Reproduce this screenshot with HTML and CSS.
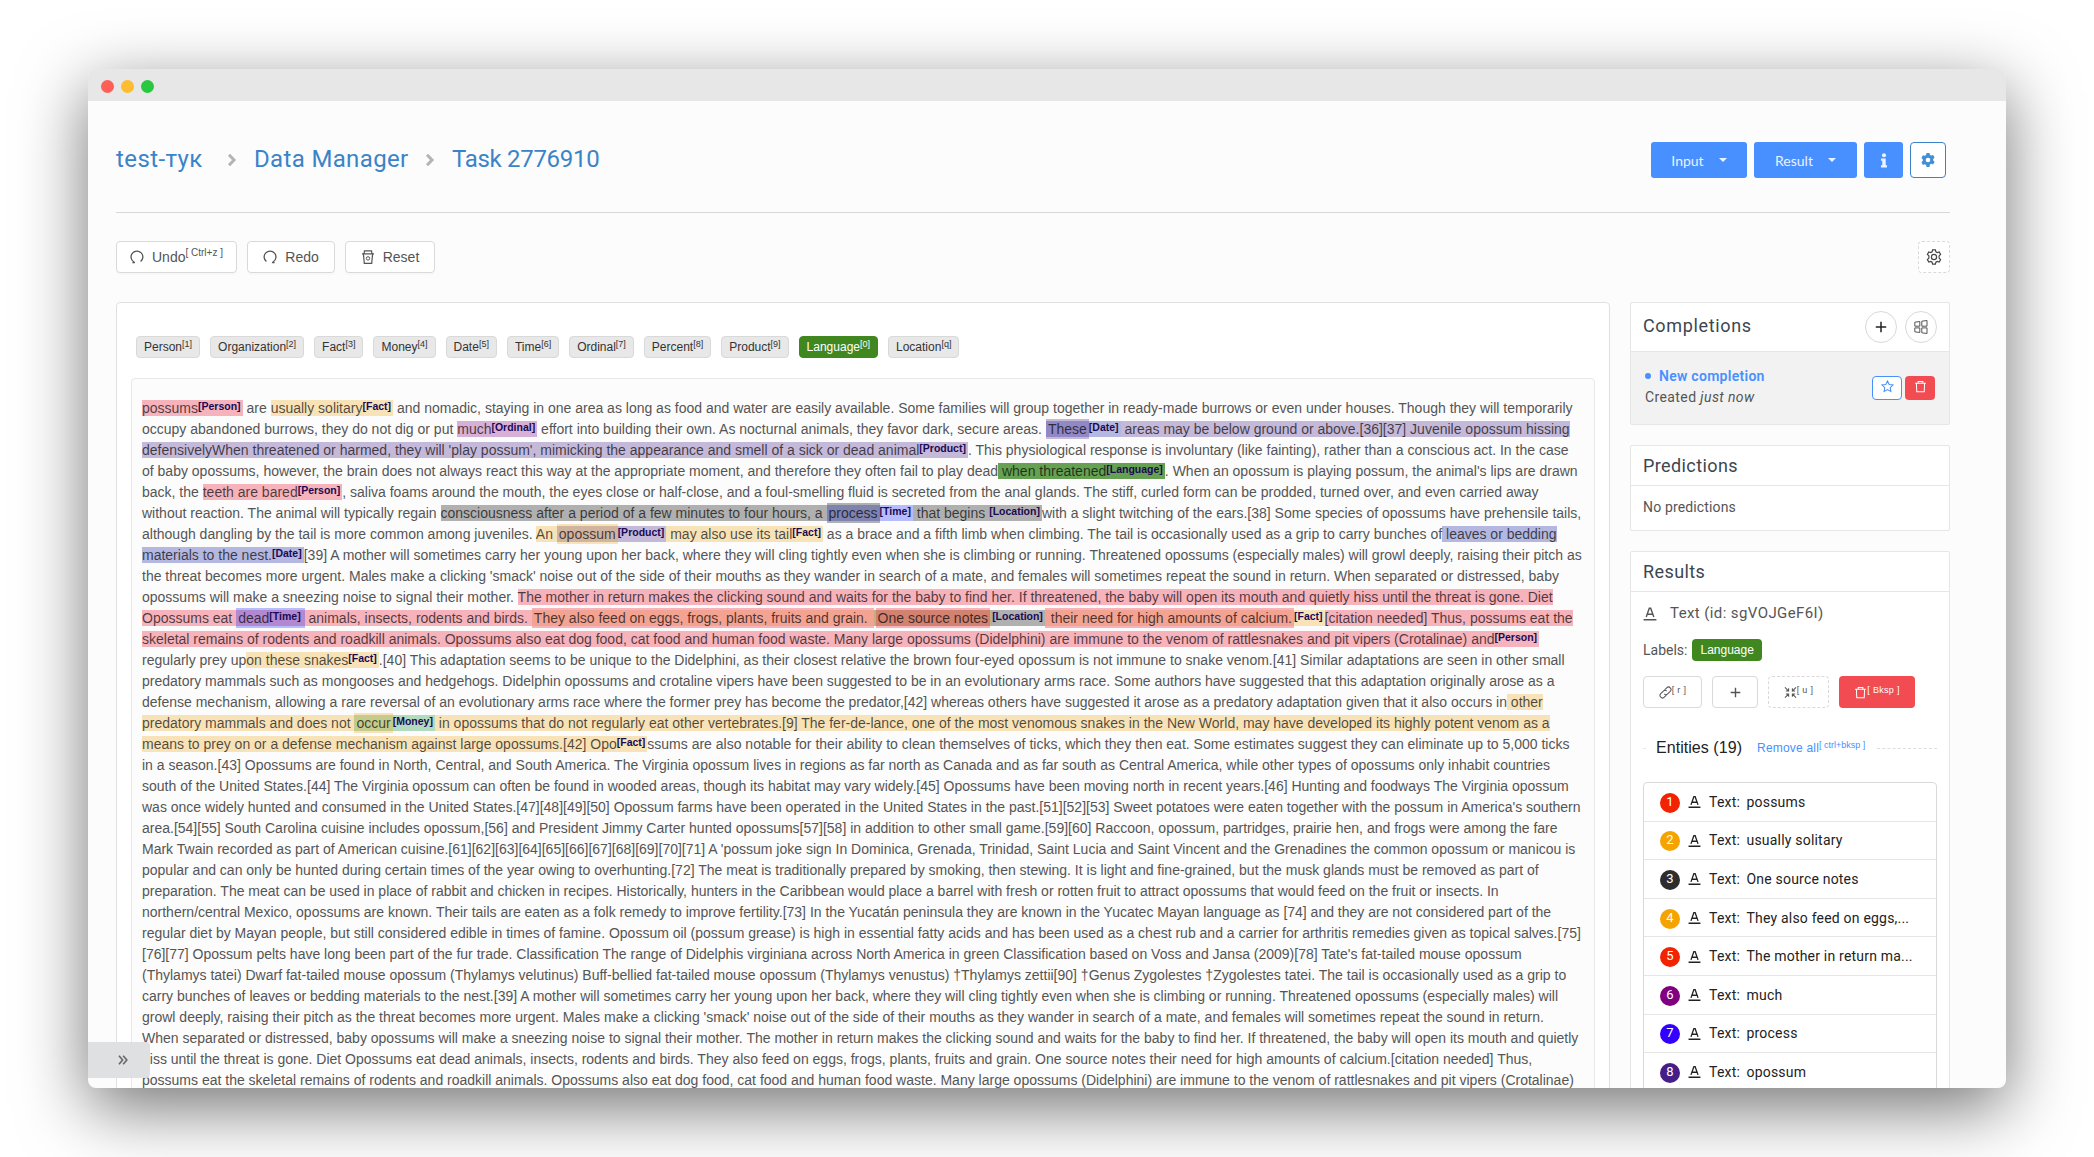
FILE: index.html
```html
<!DOCTYPE html>
<html lang="en">
<head>
<meta charset="utf-8">
<title>Task 2776910</title>
<link rel="stylesheet" href="styles.css">
</head>
<body>
<svg class="defs" aria-hidden="true">
  <symbol id="trash" viewBox="0 0 14 14"><path d="M1.2 3.5h11.6M4.5 3.3V1.5h5v1.8M2.6 3.6l.4 9h8l.4-9" fill="none" stroke="currentColor" stroke-width="1.1"/></symbol>
  <symbol id="letter" viewBox="0 0 14 14"><path d="M3.2 10.6L6.3 1.8h1.4l3.1 8.8M4.4 7.8h5.2M.6 13.2h12.8" fill="none" stroke="currentColor" stroke-width="1.4"/></symbol>
  <symbol id="plus" viewBox="0 0 14 14"><path d="M7 1.8v10.4M1.8 7h10.4" fill="none" stroke="currentColor" stroke-width="1.5"/></symbol>
</svg>
<div class="window">
  <div class="titlebar"><i class="dot red"></i><i class="dot amber"></i><i class="dot lime"></i></div>
  <div class="page">
    <header class="top">
      <nav class="crumbs">
        <a class="c1">test-тук</a>
        <svg class="chev" viewBox="0 0 10 14"><path d="M2 1.800L7 7l-5 5.200" fill="none" stroke="#b4b4b4" stroke-width="3"/></svg>
        <a class="c2">Data Manager</a>
        <svg class="chev" viewBox="0 0 10 14"><path d="M2 1.800L7 7l-5 5.200" fill="none" stroke="#b4b4b4" stroke-width="3"/></svg>
        <a class="c3">Task 2776910</a>
      </nav>
      <div class="actions">
        <button class="primary input">Input<i class="caret"></i></button>
        <button class="primary result">Result<i class="caret"></i></button>
        <button class="primary info"><svg width="8" height="15" viewBox="0 0 8 15"><circle cx="4" cy="2.200" r="2"/><path d="M1 5.500h4.700v6.800H7V14.500H1v-2.200h1.300V7.700H1z"/></svg></button>
        <button class="gear"><svg width="14" height="14" viewBox="0 0 14 14"><path fill-rule="evenodd" d="M5.500 0h3l.4 1.900 1.300.7L12.100 2l1.500 2.600-1.400 1.300v1.500l1.400 1.300-1.500 2.700-1.900-.6-1.300.7L8.500 14h-3l-.4-2-1.300-.7-1.900.6L.4 9.200l1.400-1.300V6.300L.4 4.900 1.900 2.200l1.900.5 1.300-.7zM7 4.700a2.300 2.300 0 1 0 0 4.600 2.300 2.300 0 0 0 0-4.600z"/></svg></button>
      </div>
    </header>
    <div class="toolbar">
      <button class="tool undo"><svg viewBox="0 0 14 14"><path d="M4.800 12.800L3.600 11.800A5.900 5.900 0 1 1 10.600 11.600M2.400 12.700h2.500" fill="none" stroke="currentColor" stroke-width="1.300"/></svg>Undo<sup>[ Ctrl+z ]</sup></button>
      <button class="tool redo"><svg viewBox="0 0 14 14"><path d="M9.200 12.800L10.400 11.800A5.900 5.900 0 1 0 3.400 11.600M11.600 12.700H9.100" fill="none" stroke="currentColor" stroke-width="1.300"/></svg>Redo</button>
      <button class="tool reset"><svg viewBox="0 0 14 14"><path d="M1 3.800h12M3 3.600L3.500.8h7l.5 2.800M2.400 4l.9 9.400h7.400L11.600 4" fill="none" stroke="currentColor" stroke-width="1.200"/><circle cx="7" cy="8.400" r="1.700" fill="none" stroke="currentColor"/></svg>Reset</button>
      <button class="settings"><svg width="16" height="16" viewBox="0 0 16 16" fill="none" stroke="#444" stroke-width="1.200"><path d="M6.600.8h2.800l.5 2 1.300.8 2-.6 1.400 2.400-1.500 1.500v2.200l1.500 1.500-1.400 2.400-2-.6-1.300.8-.5 2H6.600l-.5-2-1.300-.8-2 .6-1.400-2.400 1.500-1.500V6.900L1.400 5.400 2.800 3l2 .6 1.300-.8z"/><circle cx="8" cy="8" r="2.600"/></svg></button>
    </div>
    <div class="columns">
      <main class="editor">
        <div class="labels">
          <span>Person<sup>[1]</sup></span><span>Organization<sup>[2]</sup></span><span>Fact<sup>[3]</sup></span><span>Money<sup>[4]</sup></span><span>Date<sup>[5]</sup></span><span>Time<sup>[6]</sup></span><span>Ordinal<sup>[7]</sup></span><span>Percent<sup>[8]</sup></span><span>Product<sup>[9]</sup></span><span class="on">Language<sup>[0]</sup></span><span>Location<sup>[q]</sup></span>
        </div>
        <div class="text"><span class="h person">possums<b>[Person]</b></span> are <span class="h fact">usually solitary<b>[Fact]</b></span> and nomadic, staying in one area as long as food and water are easily available. Some families will group together in ready-made burrows or even under houses. Though they will temporarily<br>
occupy abandoned burrows, they do not dig or put <span class="h ordinal">much<b>[Ordinal]</b></span> effort into building their own. As nocturnal animals, they favor dark, secure areas. <span class="h date"><span class="h product in">These</span><b>[Date]</b></span><span class="h product"> areas may be below ground or above.[36][37] Juvenile opossum hissing<br>
defensivelyWhen threatened or harmed, they will 'play possum', mimicking the appearance and smell of a sick or dead animal<b>[Product]</b></span>. This physiological response is involuntary (like fainting), rather than a conscious act. In the case<br>
of baby opossums, however, the brain does not always react this way at the appropriate moment, and therefore they often fail to play dead<span class="h language"> when threatened<b>[Language]</b></span>. When an opossum is playing possum, the animal's lips are drawn<br>
back, the <span class="h person">teeth are bared<b>[Person]</b></span>, saliva foams around the mouth, the eyes close or half-close, and a foul-smelling fluid is secreted from the anal glands. The stiff, curled form can be prodded, turned over, and even carried away<br>
without reaction. The animal will typically regain <span class="h location">consciousness after a period of a few minutes to four hours, a </span><span class="h time"><span class="h location in">process</span><b>[Time]</b></span><span class="h location"> that begins <b>[Location]</b></span>with a slight twitching of the ears.[38] Some species of opossums have prehensile tails,<br>
although dangling by the tail is more common among juveniles. <span class="h fact">An </span><span class="h product"><span class="h fact in">opossum</span><b>[Product]</b></span><span class="h fact"> may also use its tail<b>[Fact]</b></span> as a brace and a fifth limb when climbing. The tail is occasionally used as a grip to carry bunches of<span class="h date"> leaves or bedding<br>
materials to the nest.<b>[Date]</b></span>[39] A mother will sometimes carry her young upon her back, where they will cling tightly even when she is climbing or running. Threatened opossums (especially males) will growl deeply, raising their pitch as<br>
the threat becomes more urgent. Males make a clicking 'smack' noise out of the side of their mouths as they wander in search of a mate, and females will sometimes repeat the sound in return. When separated or distressed, baby<br>
opossums will make a sneezing noise to signal their mother. <span class="h person">The mother in return makes the clicking sound and waits for the baby to find her. If threatened, the baby will open its mouth and quietly hiss until the threat is gone. Diet<br>
Opossums eat <span class="h time in">dead<b>[Time]</b></span> animals, insects, rodents and birds. </span><span class="h fact"><span class="h person in">They also feed on eggs, frogs, plants, fruits and grain. </span></span><span class="h location"><span class="h fact wrap"><span class="h person in">One source notes</span></span><b>[Location]</b></span><span class="h fact"><span class="h person in"> their need for high amounts of calcium.</span><b>[Fact]</b></span><span class="h person">[citation needed] Thus, possums eat the<br>
skeletal remains of rodents and roadkill animals. Opossums also eat dog food, cat food and human food waste. Many large opossums (Didelphini) are immune to the venom of rattlesnakes and pit vipers (Crotalinae) and<b>[Person]</b></span><br>
regularly prey up<span class="h fact">on these snakes<b>[Fact]</b></span>.[40] This adaptation seems to be unique to the Didelphini, as their closest relative the brown four-eyed opossum is not immune to snake venom.[41] Similar adaptations are seen in other small<br>
predatory mammals such as mongooses and hedgehogs. Didelphin opossums and crotaline vipers have been suggested to be in an evolutionary arms race. Some authors have suggested that this adaptation originally arose as a<br>
defense mechanism, allowing a rare reversal of an evolutionary arms race where the former prey has become the predator,[42] whereas others have suggested it arose as a predatory adaptation given that it also occurs in<span class="h fact"> other<br>
predatory mammals and does not </span><span class="h money"><span class="h fact in">occur</span><b>[Money]</b></span><span class="h fact"> in opossums that do not regularly eat other vertebrates.[9] The fer-de-lance, one of the most venomous snakes in the New World, may have developed its highly potent venom as a<br>
means to prey on or a defense mechanism against large opossums.[42] Opo<b>[Fact]</b></span>ssums are also notable for their ability to clean themselves of ticks, which they then eat. Some estimates suggest they can eliminate up to 5,000 ticks<br>
in a season.[43] Opossums are found in North, Central, and South America. The Virginia opossum lives in regions as far north as Canada and as far south as Central America, while other types of opossums only inhabit countries<br>
south of the United States.[44] The Virginia opossum can often be found in wooded areas, though its habitat may vary widely.[45] Opossums have been moving north in recent years.[46] Hunting and foodways The Virginia opossum<br>
was once widely hunted and consumed in the United States.[47][48][49][50] Opossum farms have been operated in the United States in the past.[51][52][53] Sweet potatoes were eaten together with the possum in America's southern<br>
area.[54][55] South Carolina cuisine includes opossum,[56] and President Jimmy Carter hunted opossums[57][58] in addition to other small game.[59][60] Raccoon, opossum, partridges, prairie hen, and frogs were among the fare<br>
Mark Twain recorded as part of American cuisine.[61][62][63][64][65][66][67][68][69][70][71] A 'possum joke sign In Dominica, Grenada, Trinidad, Saint Lucia and Saint Vincent and the Grenadines the common opossum or manicou is<br>
popular and can only be hunted during certain times of the year owing to overhunting.[72] The meat is traditionally prepared by smoking, then stewing. It is light and fine-grained, but the musk glands must be removed as part of<br>
preparation. The meat can be used in place of rabbit and chicken in recipes. Historically, hunters in the Caribbean would place a barrel with fresh or rotten fruit to attract opossums that would feed on the fruit or insects. In<br>
northern/central Mexico, opossums are known. Their tails are eaten as a folk remedy to improve fertility.[73] In the Yucatán peninsula they are known in the Yucatec Mayan language as [74] and they are not considered part of the<br>
regular diet by Mayan people, but still considered edible in times of famine. Opossum oil (possum grease) is high in essential fatty acids and has been used as a chest rub and a carrier for arthritis remedies given as topical salves.[75]<br>
[76][77] Opossum pelts have long been part of the fur trade. Classification The range of Didelphis virginiana across North America in green Classification based on Voss and Jansa (2009)[78] Tate's fat-tailed mouse opossum<br>
(Thylamys tatei) Dwarf fat-tailed mouse opossum (Thylamys velutinus) Buff-bellied fat-tailed mouse opossum (Thylamys venustus) †Thylamys zettii[90] †Genus Zygolestes †Zygolestes tatei. The tail is occasionally used as a grip to<br>
carry bunches of leaves or bedding materials to the nest.[39] A mother will sometimes carry her young upon her back, where they will cling tightly even when she is climbing or running. Threatened opossums (especially males) will<br>
growl deeply, raising their pitch as the threat becomes more urgent. Males make a clicking 'smack' noise out of the side of their mouths as they wander in search of a mate, and females will sometimes repeat the sound in return.<br>
When separated or distressed, baby opossums will make a sneezing noise to signal their mother. The mother in return makes the clicking sound and waits for the baby to find her. If threatened, the baby will open its mouth and quietly<br>
hiss until the threat is gone. Diet Opossums eat dead animals, insects, rodents and birds. They also feed on eggs, frogs, plants, fruits and grain. One source notes their need for high amounts of calcium.[citation needed] Thus,<br>
possums eat the skeletal remains of rodents and roadkill animals. Opossums also eat dog food, cat food and human food waste. Many large opossums (Didelphini) are immune to the venom of rattlesnakes and pit vipers (Crotalinae)</div>
      </main>
      <aside class="side">
        <section class="panel">
          <div class="head tall"><h2 class="wide">Completions</h2><button class="round"><svg><use href="#plus"/></svg></button><button class="round"><svg viewBox="0 0 14 14"><path d="M.8 2.200L5.800 1.500v4.700H.8zM7.800 1.200l5.200-.7v5.700H7.800zM.8 7.900h5v4.600L.8 11.800zM7.800 7.900H13v5.600l-5.200-.7z" fill="none" stroke="#555"/></svg></button></div>
          <div class="completion">
            <div class="info-text"><strong><i class="bullet"></i>New completion</strong><span>Created <em>just now</em></span></div>
            <button class="star"><svg viewBox="0 0 14 14"><path d="M7 1l1.800 3.900 4.200.5-3.100 2.900.8 4.200L7 10.400l-3.700 2.100.8-4.200L1 5.400l4.200-.5z" fill="none" stroke="currentColor" stroke-width="1.100"/></svg></button>
            <button class="del"><svg><use href="#trash"/></svg></button>
          </div>
        </section>
        <section class="panel">
          <div class="head"><h2>Predictions</h2></div>
          <p class="none">No predictions</p>
        </section>
        <section class="panel results">
          <div class="head"><h2>Results</h2></div>
          <div class="body">
            <div class="region"><svg><use href="#letter"/></svg>Text (id: sgVOJGeF6I)</div>
            <div class="lab">Labels: <span>Language</span></div>
            <div class="ops">
              <button class="link"><svg viewBox="0 0 14 14"><path d="M6 4.200l2.300-2.300a2.600 2.600 0 0 1 3.800 3.800L9.300 8.500a2.600 2.600 0 0 1-3.600.1M8 9.800l-2.300 2.300a2.600 2.600 0 0 1-3.800-3.800l2.800-2.800a2.600 2.600 0 0 1 3.600-.1" fill="none" stroke="currentColor" stroke-width="1.100"/></svg><sup>[ r ]</sup></button>
              <button class="add"><svg><use href="#plus"/></svg></button>
              <button class="unselect"><svg viewBox="0 0 14 14"><path d="M1 1.500l3.600 3.600M5 2.500v3H2M13 1.500L9.400 5.100M9 2.500v3h3M1 12.500l3.600-3.600M5 11.500v-3H2M13 12.500L9.400 8.900M9 11.500v-3h3" fill="none" stroke="currentColor" stroke-width="1.100"/></svg><sup>[ u ]</sup></button>
              <button class="bksp"><svg><use href="#trash"/></svg><sup>[ Bksp ]</sup></button>
            </div>
            <div class="divider"><span class="ent">Entities (19)</span><span class="remove">Remove all<sup>[ ctrl+bksp ]</sup></span></div>
            <ul class="list">
              <li><i class="n r">1</i><svg><use href="#letter"/></svg><span>Text:</span>possums</li>
              <li><i class="n o">2</i><svg><use href="#letter"/></svg><span>Text:</span>usually solitary</li>
              <li><i class="n k">3</i><svg><use href="#letter"/></svg><span>Text:</span>One source notes</li>
              <li><i class="n o">4</i><svg><use href="#letter"/></svg><span>Text:</span>They also feed on eggs,...</li>
              <li><i class="n r">5</i><svg><use href="#letter"/></svg><span>Text:</span>The mother in return ma...</li>
              <li><i class="n p">6</i><svg><use href="#letter"/></svg><span>Text:</span>much</li>
              <li><i class="n b">7</i><svg><use href="#letter"/></svg><span>Text:</span>process</li>
              <li><i class="n v">8</i><svg><use href="#letter"/></svg><span>Text:</span>opossum</li>
            </ul>
          </div>
        </section>
      </aside>
    </div>
  </div>
  <button class="expand"><svg width="10" height="10" viewBox="0 0 10 10"><path d="M1 .8L4.600 5 1 9.200M5.200.8L8.800 5 5.200 9.200" fill="none" stroke="#6b6b6b" stroke-width="1.700"/></svg></button>
</div>
</body>
</html>
```
FILE: styles.css
```css
* { box-sizing: border-box; }
body { margin: 0; height: 1157px; overflow: hidden; background: #fff; font-family: Roboto, "Liberation Sans", sans-serif; font-size: 14px; color: #555; padding: 69px 88px; }
button { font: inherit; color: inherit; margin: 0; padding: 0; border: 0; background: none; display: flex; align-items: center; justify-content: center; flex: none; }
h2, p, ul { margin: 0; padding: 0; font-weight: 400; }
.defs { position: absolute; width: 0; height: 0; }
.window { position: relative; width: 1918px; height: 1019px; border-radius: 8px; background: #fcfcfc; overflow: hidden; box-shadow: 0 20px 68px rgba(0,0,0,.55); }
.titlebar { height: 32px; background: #e7e7e7; display: flex; align-items: center; gap: 7px; padding: 2px 0 0 13px; }
.dot { width: 13px; height: 13px; border-radius: 50%; }
.red { background: #ff5f57; } .amber { background: #febc2e; } .lime { background: #28c840; }
.page { padding: 0 56px 0 28px; }
.top { height: 112px; border-bottom: 1px solid #d8d8d8; display: flex; align-items: center; justify-content: space-between; padding: 5px 4px 0 0; }
.crumbs { display: flex; align-items: center; font-size: 24px; color: #3b83c9; letter-spacing: .4px; }
.crumbs a { white-space: nowrap; }
.c1 { width: 94px; } .c2 { width: 154px; letter-spacing: .35px; } .c3 { width: 148px; letter-spacing: -.3px; }
.chev { width: 10px; height: 14px; margin: 1px 17px 0; }
.actions { display: flex; gap: 7px; font-family: Lato, sans-serif; margin-top: 2px; }
.primary { height: 36px; background: #4890ff; color: #eaf3ff; border-radius: 3px; fill: #eaf3ff; }
.input { width: 96px; } .result { width: 103px; } .info { width: 39px; }
.caret { border: 4px solid transparent; border-top-color: #eaf3ff; border-bottom: 0; margin-left: 15px; }
.gear { width: 36px; height: 36px; border: 1px solid #3b83c9; border-radius: 4px; fill: #4190d6; background: #fff; }
.toolbar { height: 89px; display: flex; gap: 10px; padding-top: 28px; font-family: "Liberation Sans", sans-serif; }
.tool { height: 32px; border: 1px solid #d9d9d9; border-radius: 4px; background: #fff; box-shadow: 0 2px 0 rgba(0,0,0,.015); }
.tool svg { width: 14px; height: 14px; margin-right: 8px; }
.undo { width: 121px; } .redo { width: 88px; } .reset { width: 90px; }
sup { line-height: 0; font-size: 10px; position: relative; top: -4px; vertical-align: baseline; }
.settings { margin-left: auto; width: 32px; height: 32px; border: 1px dashed #d9d9d9; border-radius: 4px; background: #fff; }
.columns { display: flex; gap: 20px; }
.editor { width: 1494px; height: 900px; border: 1px solid #e0e0e0; border-radius: 4px; background: #fff; padding: 33px 14px; }
.labels { display: flex; gap: 10px; padding-left: 5px; height: 42px; font: 12px "Liberation Sans", sans-serif; color: #333; }
.labels span { height: 22px; line-height: 21px; padding: 0 7px; border: 1px solid #d9d9d9; border-radius: 4px; background: #e8e8e8; white-space: nowrap; }
.labels sup { font-size: 9px; }
.labels .on { background: #41871f; border-color: #41871f; color: #fff; }
.text { height: 900px; border: 1px solid #e8e8e8; border-radius: 4px; background: #fcfcfc; padding: 19px 10px; font: 14px/21px "Liberation Sans", sans-serif; white-space: nowrap; width: 1464px; }
.h { color: rgba(0,0,0,.69); }
.h b { font-size: 10.500px; line-height: 0; position: relative; top: -3px; color: #1b0a52; padding-right: 2px; }
.in { padding: 2px; }
.wrap { padding: 0 2px; }
.person { background: rgba(235,55,80,.37); }
.fact { background: rgba(240,170,30,.3); }
.ordinal { background: rgba(128,0,128,.3); }
.product { background: rgba(70,30,135,.3); }
.date { background: rgba(12,24,155,.3); }
.time { background: rgba(20,40,255,.3); }
.location { background: rgba(0,0,0,.3); }
.money { background: rgba(5,140,45,.3); }
.language { background: #66a052; }
.side { width: 320px; display: flex; flex-direction: column; gap: 20px; }
.panel { border: 1px solid #e6e6e6; border-radius: 2px; background: #fff; }
.head { height: 40px; border-bottom: 1px solid #e6e6e6; padding: 0 12px 1px; display: flex; align-items: center; }
.head.tall { height: 49px; gap: 8px; }
h2 { font-size: 18px; color: #3c4650; letter-spacing: .4px; flex: 1; }
h2.wide { letter-spacing: .65px; padding-bottom: 2px; }
.round { width: 32px; height: 32px; border: 1px solid #d9d9d9; border-radius: 50%; color: #222; background: #fff; }
.round svg, .add svg { width: 14px; height: 14px; }
.completion { height: 72px; background: #f2f2f2; display: flex; align-items: center; padding: 0 14px; gap: 3px; }
.info-text { flex: 1; display: flex; flex-direction: column; line-height: 21px; padding-bottom: 2px; letter-spacing: .4px; }
strong { color: #4890ff; font-weight: 600; letter-spacing: .28px; }
.bullet { display: inline-block; width: 6px; height: 6px; border-radius: 50%; background: #4890ff; margin-right: 8px; vertical-align: 2px; }
.star, .del { width: 30px; height: 24px; border-radius: 4px; padding-bottom: 4px; }
.star { border: 1px solid #4890ff; color: #4890ff; background: #fff; }
.del, .bksp { background: #f24b51; color: #fff; }
.star svg, .del svg { width: 13px; height: 13px; }
.none { height: 44px; padding: 13px 12px 0; letter-spacing: .15px; }
.results { height: 700px; }
.body { padding: 0 12px; }
.region { display: flex; align-items: center; height: 42px; font-size: 15px; letter-spacing: .4px; }
.region svg { width: 14px; height: 15px; margin-right: 13px; }
.lab { display: flex; align-items: center; height: 32px; gap: 5px; }
.lab span { background: #41871f; color: #fff; border-radius: 4px; font: 12px/22px "Liberation Sans", sans-serif; padding: 0 8px; }
.ops { display: flex; margin-top: 10px; font-family: "Liberation Sans", sans-serif; }
.ops button { height: 32px; border: 1px solid #d9d9d9; border-radius: 4px; }
.ops svg { width: 13px; height: 13px; }
.ops .link { width: 59px; margin-right: 10px; } .ops .add { width: 46px; margin-right: 10px; } .ops .unselect { width: 61px; border-style: dashed; margin-right: 10px; } .ops .bksp { width: 76px; border: 0; }
.ops sup { font-size: 9px; top: -2px; letter-spacing: .3px; }
.divider { display: flex; align-items: center; height: 24px; margin: 28px 0 22px; font-family: "Liberation Sans", sans-serif; white-space: nowrap; }
.divider::before { content: ""; width: 3px; border-top: 1px dashed #e8e8e8; margin-right: 10px; }
.divider::after { content: ""; flex: 1; border-top: 1px dashed #ddd; margin-left: 12px; }
.ent { font-size: 16px; color: #222; margin-right: 15px; letter-spacing: .05px; }
.remove { font-size: 12px; color: #4890ff; letter-spacing: .2px; }
.remove sup { font-size: 9px; letter-spacing: 0; }
.list { list-style: none; border: 1px solid #d9d9d9; border-radius: 4px; color: #222; }
.list li { height: 38.600px; border-bottom: 1px solid #e6e6e6; display: flex; align-items: center; padding-left: 16px; white-space: nowrap; letter-spacing: .2px; }
.n { width: 20px; height: 20px; border-radius: 50%; font: 13px/18px Roboto, sans-serif; color: #fff; text-align: center; margin: 2px 8px 0 0; }
.list svg { width: 13px; height: 13px; margin-right: 8px; }
.list span { width: 37.500px; }
.r { background: #f22300; } .o { background: #f5a300; } .k { background: #2d2d2d; } .p { background: #800080; } .b { background: #3300ff; } .v { background: #461e87; }
.expand { position: absolute; left: 0; bottom: 10px; width: 62px; height: 36px; background: #dfe0e1; border-radius: 0 4px 4px 0; padding-left: 8px; }
```
